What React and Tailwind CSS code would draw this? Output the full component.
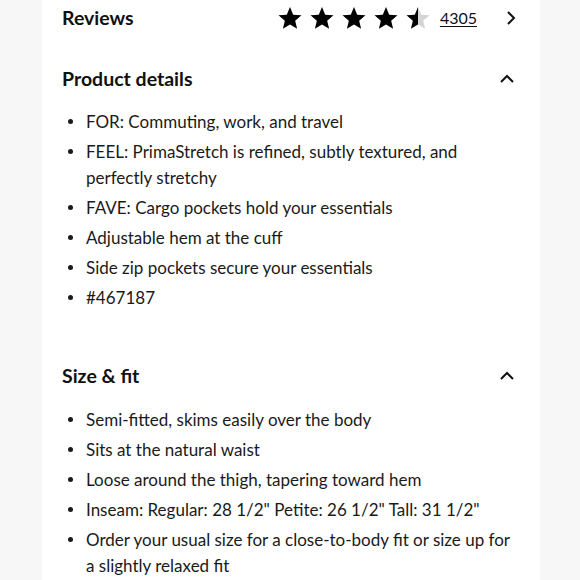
import React from 'react';

const Star = ({ fill = 'full' }) => {
  const d = 'M12 1.8l2.95 7.1 7.65.6-5.83 5 1.8 7.47L12 17.95l-6.57 4.02 1.8-7.47-5.83-5 7.65-.6z';
  return (
    <svg width="26" height="26" viewBox="0 0 24 24">
      {fill === 'half' && (
        <defs>
          <linearGradient id="halfstar">
            <stop offset="50%" stopColor="#000" />
            <stop offset="50%" stopColor="#d4d4d4" />
          </linearGradient>
        </defs>
      )}
      <path d={d} fill={fill === 'half' ? 'url(#halfstar)' : '#000'} />
    </svg>
  );
};

const ChevronUp = () => (
  <svg width="18" height="18" viewBox="0 0 18 18" fill="none" stroke="#111" strokeWidth="2">
    <path d="M3 12l6-6 6 6" />
  </svg>
);

const ChevronRight = () => (
  <svg width="18" height="18" viewBox="0 0 18 18" fill="none" stroke="#111" strokeWidth="2">
    <path d="M6 3l6 6-6 6" />
  </svg>
);

const Bullets = ({ items }) => (
  <ul className="flex flex-col gap-1 pl-[6px] pr-[6px]">
    {items.map((t) => (
      <li key={t} className="flex gap-[13px] text-[17px] leading-[26px] text-[#1a1a1a]">
        <span className="mt-[10px] h-[5px] w-[5px] shrink-0 rounded-full bg-[#1a1a1a]" />
        <span>{t}</span>
      </li>
    ))}
  </ul>
);

export default function App() {
  return (
    <div className="flex h-[580px] w-[580px] overflow-hidden bg-[#f7f7f7] font-['Lato',sans-serif]">
      <div className="ml-[42px] w-[498px] shrink-0 bg-white pl-5 pr-[20px]">
        <div className="flex h-[36px] items-center justify-between">
          <h2 className="text-[19.5px] font-bold text-[#111]">Reviews</h2>
          <div className="flex items-center">
            <div className="flex gap-[6px]">
              <Star />
              <Star />
              <Star />
              <Star />
              <Star fill="half" />
            </div>
            <span className="ml-[9px] text-[16px] text-[#111] underline underline-offset-2">4305</span>
            <span className="ml-[25px]">
              <ChevronRight />
            </span>
          </div>
        </div>

        <div className="mt-[25px] flex h-[36px] items-center justify-between pr-[4px]">
          <h2 className="text-[19.5px] font-bold text-[#111]">Product details</h2>
          <ChevronUp />
        </div>
        <div className="mt-[12px]">
          <Bullets
            items={[
              'FOR: Commuting, work, and travel',
              'FEEL: PrimaStretch is refined, subtly textured, and perfectly stretchy',
              'FAVE: Cargo pockets hold your essentials',
              'Adjustable hem at the cuff',
              'Side zip pockets secure your essentials',
              '#467187',
            ]}
          />
        </div>

        <div className="mt-[47px] flex h-[36px] items-center justify-between pr-[4px]">
          <h2 className="text-[19.5px] font-bold text-[#111]">Size &amp; fit</h2>
          <ChevronUp />
        </div>
        <div className="mt-[13px]">
          <Bullets
            items={[
              'Semi-fitted, skims easily over the body',
              'Sits at the natural waist',
              'Loose around the thigh, tapering toward hem',
              'Inseam: Regular: 28 1/2" Petite: 26 1/2" Tall: 31 1/2"',
              'Order your usual size for a close-to-body fit or size up for a slightly relaxed fit',
            ]}
          />
        </div>
      </div>
    </div>
  );
}
